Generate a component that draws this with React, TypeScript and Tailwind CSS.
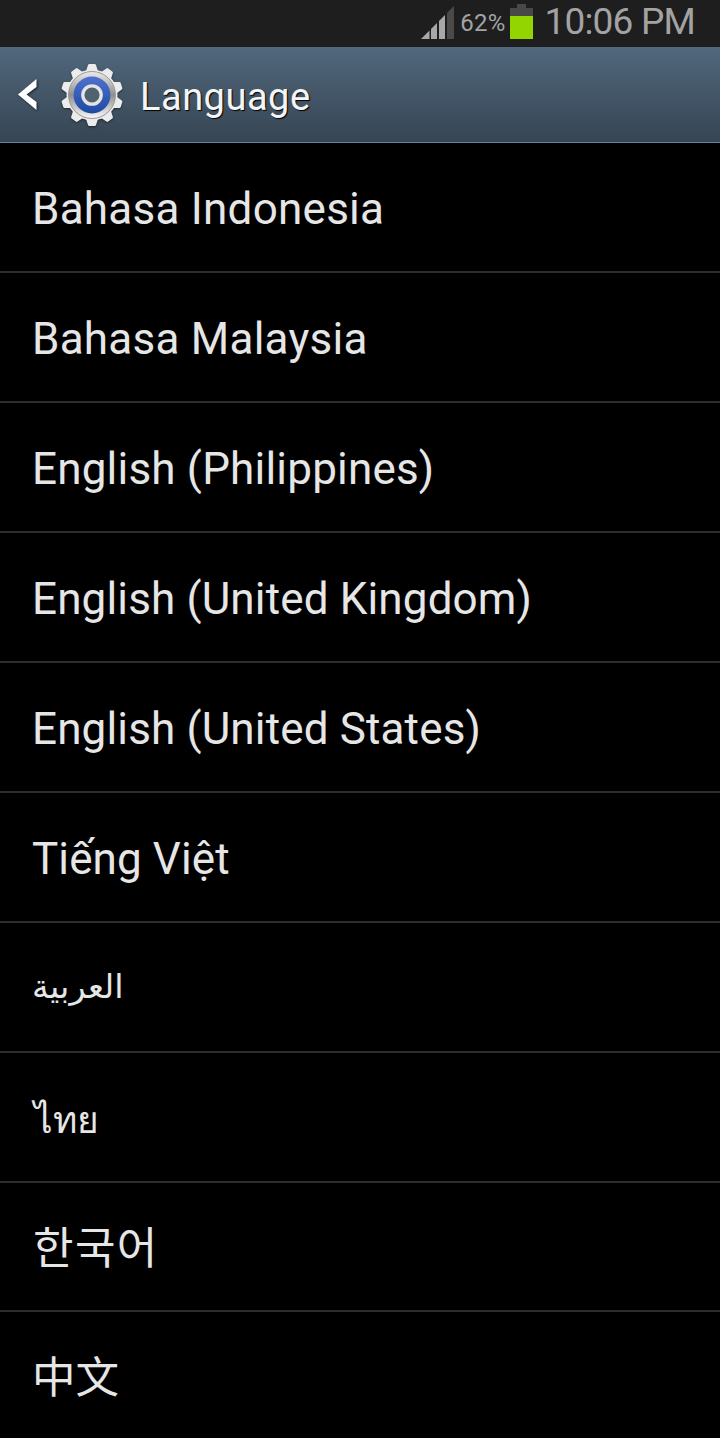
const languages = [
  { name: 'Bahasa Indonesia', text: 'pt-1 text-[44px] tracking-[0.25px]' },
  { name: 'Bahasa Malaysia', text: 'pt-1 text-[44px] tracking-[0.25px]' },
  { name: 'English (Philippines)', text: 'pt-1 text-[44px] tracking-[0.2px]' },
  { name: 'English (United Kingdom)', text: 'pt-1 text-[44px] tracking-[0.15px]' },
  { name: 'English (United States)', text: 'pt-1 text-[44px] tracking-[0.15px]' },
  { name: 'Tiếng Việt', text: 'pt-1 text-[44px] tracking-[0.1px]' },
  { name: 'العربية', text: "text-[33.5px] font-['DejaVu_Sans',sans-serif]" },
  { name: 'ไทย', text: "pt-1 pl-0.5 text-[37px] font-['Noto_Sans',sans-serif]" },
  { name: '한국어', text: "pb-1 pl-px text-[44px] tracking-[1.4px] font-['Noto_Sans_CJK_KR',sans-serif]", row: 'h-[129px]' },
  { name: '中文', text: "pb-1 text-[43.5px] font-['Noto_Sans_CJK_SC',sans-serif]" },
]

const teeth = [0, 36, 72, 108, 144, 180, 216, 252, 288, 324]

function SignalIcon() {
  return (
    <svg width="33" height="33" viewBox="0 0 33 33">
      <path d="M33 0V33H26V7Z" fill="#4a4a4a" />
      <path d="M0 33L8.500 24.500V33Z" fill="#a8a8a8" />
      <path d="M10 33V23L16 17V33Z" fill="#a8a8a8" />
      <path d="M18 33V15L24 9V33Z" fill="#a8a8a8" />
    </svg>
  )
}

function BatteryIcon() {
  return (
    <svg width="23" height="35" viewBox="0 0 23 35">
      <path d="M7 0H16V4H23V13H0V4H7Z" fill="#484848" />
      <rect y="12" width="23" height="23" fill="#93d500" />
    </svg>
  )
}

function GearIcon() {
  return (
    <svg width="64" height="64" viewBox="-32 -32 64 64" className="drop-shadow-[0_1px_1px_rgba(0,0,0,0.5)]">
      <defs>
        <linearGradient id="rim" x1="0" y1="0" x2="0" y2="1">
          <stop offset="0" stopColor="#ececec" />
          <stop offset="0.5" stopColor="#8f8f8f" />
          <stop offset="1" stopColor="#fafafa" />
        </linearGradient>
        <linearGradient id="disc" x1="0" y1="0" x2="0" y2="1">
          <stop offset="0" stopColor="#4f70d0" />
          <stop offset="1" stopColor="#1d4ba2" />
        </linearGradient>
      </defs>
      {teeth.map((a) => (
        <path key={a} d="M-6 -24L-4 -30Q-3.700 -31 -2.500 -31H2.500Q3.700 -31 4 -30L6 -24Z" fill="#ececec" transform={`rotate(${a})`} />
      ))}
      <circle r="25.500" fill="#ececec" />
      <circle r="23.500" fill="url(#rim)" stroke="#9a9a9a" strokeWidth="1" />
      <circle r="18.500" fill="url(#disc)" />
      <circle r="9.200" fill="#50616f" stroke="#e4e4e4" strokeWidth="3.300" />
    </svg>
  )
}

export default function App() {
  return (
    <div className="h-[1438px] w-[720px] overflow-hidden bg-black font-[Roboto,sans-serif]">
      {/* Status bar */}
      <div className="flex h-[47px] items-start justify-end bg-[#1e1e1e] pr-[25px] text-[#a3a3a3]">
        <div className="mt-[6px] mr-[6px]">
          <SignalIcon />
        </div>
        <span className="mt-[10px] mr-[5px] text-[24px] leading-[26px] tracking-[0.2px]">62%</span>
        <div className="mt-1 mr-[11px]">
          <BatteryIcon />
        </div>
        <span className="text-[37px] leading-[44px] tracking-[-0.8px]">10:06 PM</span>
      </div>

      {/* Title bar */}
      <header className="flex h-24 items-center border-b border-[#688094] bg-linear-to-b from-[#51687d] to-[#364553] pl-[18px]">
        <svg width="20" height="34" viewBox="0 0 20 34" className="drop-shadow-[1px_1px_1px_rgba(0,0,0,0.6)]">
          <path d="M18.500 1V9L8.500 16.500L18.500 24V32L0 16.500Z" fill="#fff" />
        </svg>
        <div className="ml-[22px]">
          <GearIcon />
        </div>
        <h1 className="mt-1.5 ml-4 text-[38px] tracking-[0.5px] text-[#f5f5f5] [text-shadow:1px_1px_1px_#000]">Language</h1>
      </header>

      <ul>
        {languages.map((l) => (
          <li key={l.name} className={`flex items-center border-b-2 border-[#2d2d2d] pl-8 text-[#e6e6e6] last:border-b-0 ${l.row || 'h-[130px]'}`}>
            <span className={`whitespace-nowrap ${l.text}`}>{l.name}</span>
          </li>
        ))}
      </ul>
    </div>
  )
}
